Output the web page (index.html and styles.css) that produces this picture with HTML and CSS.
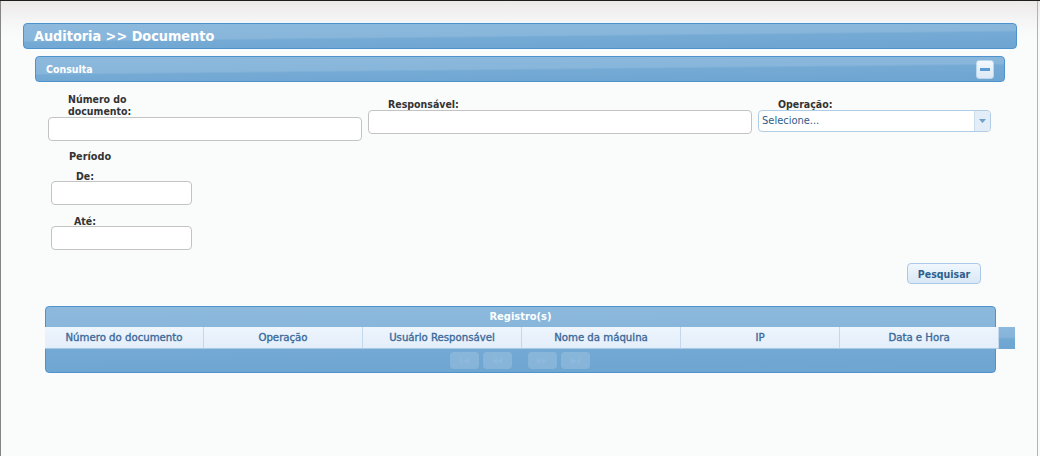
FILE: index.html
```html
<!DOCTYPE html>
<html lang="pt">
<head>
<meta charset="utf-8">
<title>Auditoria &gt;&gt; Documento</title>
<link rel="stylesheet" href="styles.css">
</head>
<body>
<div class="frame">
  <div class="bar title-bar">Auditoria &gt;&gt; Documento</div>
  <div class="bar consulta-bar">
    <span class="consulta-title">Consulta</span>
    <span class="min-btn"><span class="min-dash"></span></span>
  </div>

  <div class="form">
    <div class="row1">
      <div class="field f-num">
        <label class="lbl lbl-num">Número do documento:</label>
        <input class="inp inp-num" type="text">
      </div>
      <div class="field f-resp">
        <label class="lbl">Responsável:</label>
        <input class="inp inp-resp" type="text">
      </div>
      <div class="field f-op">
        <label class="lbl">Operação:</label>
        <div class="select">
          <span class="select-text">Selecione...</span>
          <span class="select-arrow">
            <svg width="7" height="4" viewBox="0 0 7 4"><path d="M0 0h7L3.5 4z" fill="#6c9fcb"/></svg>
          </span>
        </div>
      </div>
    </div>

    <div class="periodo">Período</div>
    <div class="field small f-de">
      <label class="lbl lbl-de">De:</label>
      <input class="inp inp-date" type="text">
    </div>
    <div class="field small f-ate">
      <label class="lbl lbl-ate">Até:</label>
      <input class="inp inp-date" type="text">
    </div>

    <div class="actions"><button class="btn" type="button">Pesquisar</button></div>
  </div>

  <div class="grid">
    <div class="grid-head">Registro(s)</div>
    <div class="grid-cols">
      <div class="col">Número do documento</div>
      <div class="col">Operação</div>
      <div class="col">Usuário Responsável</div>
      <div class="col">Nome da máquina</div>
      <div class="col">IP</div>
      <div class="col">Data e Hora</div>
      <div class="col-stub"></div>
    </div>
    <div class="grid-foot">
      <span class="pg">
        <svg width="9" height="6" viewBox="0 0 9 6"><path d="M0 0h1.5v6H0zM9 0v6L3 3z" fill="#8fb9de"/></svg>
      </span>
      <span class="pg">
        <svg width="10" height="6" viewBox="0 0 10 6"><path d="M5 0v6L0 3zM10 0v6L5 3z" fill="#8fb9de"/></svg>
      </span>
      <span class="pg pg-gap">
        <svg width="10" height="6" viewBox="0 0 10 6"><path d="M0 0v6l5-3zM5 0v6l5-3z" fill="#8fb9de"/></svg>
      </span>
      <span class="pg">
        <svg width="9" height="6" viewBox="0 0 9 6"><path d="M0 0v6l6-3zM7.5 0H9v6H7.5z" fill="#8fb9de"/></svg>
      </span>
    </div>
  </div>
</div>
</body>
</html>
```

FILE: styles.css
```css
html, body {
  margin: 0;
  padding: 0;
}

body {
  width: 1040px;
  height: 456px;
  overflow: hidden;
  border-top: 1px solid #1e1e1e;
  box-sizing: border-box;
  background: linear-gradient(#ebe8e8 0, #f5f5f5 20px, #fafcfc 38px, #fafcfc 100%);
  font-family: "DejaVu Sans Condensed", "DejaVu Sans", sans-serif;
  font-stretch: condensed;
}

.frame {
  width: 1038px;
  height: 455px;
  box-sizing: border-box;
  border-left: 1px solid #858585;
  border-right: 1px solid #a3b6c4;
  padding-top: 22px;
}

/* blue glossy bars */
.bar {
  box-sizing: border-box;
  border: 1px solid #4d93cd;
  border-radius: 4px;
  background:
    linear-gradient(179.4deg, #8cb9dc 0%, #88b6db 48%, #74aad4 54%, #6ea5d1 100%);
  color: #fff;
  font-weight: bold;
}

.title-bar {
  margin-left: 22px;
  width: 994px;
  height: 26px;
  padding-left: 10px;
  font-size: 14.3px;
  line-height: 24px;
}

.consulta-bar {
  margin-top: 7px;
  margin-left: 34px;
  width: 970px;
  height: 26px;
  padding-left: 10px;
  padding-right: 10px;
  font-size: 10.5px;
  line-height: 24px;
  display: flex;
  justify-content: space-between;
  align-items: center;
}

.min-btn {
  width: 18px;
  height: 19px;
  box-sizing: border-box;
  border: 1px solid #bcd6ec;
  border-radius: 3px;
  background: linear-gradient(#f2f8fd, #dde9f6);
  display: flex;
  align-items: center;
  justify-content: center;
}

.min-dash {
  width: 10px;
  height: 3px;
  background: #5b9bd1;
}

/* form */
.form {
  margin-left: 47px;
  width: 933px;
  padding-top: 11px;
}

.row1 {
  display: flex;
  gap: 6px;
  width: 945px;
}

.field {
  display: flex;
  flex-direction: column;
}

.lbl {
  display: block;
  color: #333;
  font-size: 10.5px;
  font-weight: bold;
  line-height: 12px;
  padding-left: 20px;
}

.lbl-num {
  width: 70px;
}

.f-resp,
.f-op {
  padding-top: 5px;
}

.inp {
  box-sizing: border-box;
  height: 24px;
  margin: 0;
  border: 1px solid #c3c3c3;
  border-radius: 4px;
  background: #fff;
  padding: 2px 4px;
  font-family: inherit;
  font-size: 11px;
  outline: none;
}

.inp-num {
  width: 314px;
}

.inp-resp {
  width: 384px;
}

.select {
  box-sizing: border-box;
  width: 233px;
  height: 22px;
  border: 1px solid #b1cde6;
  border-radius: 4px;
  background: #fff;
  display: flex;
  align-items: stretch;
  overflow: hidden;
}

.select-text {
  flex: 1;
  padding-left: 3px;
  color: #2d5c8a;
  font-size: 11px;
  line-height: 20px;
}

.select-arrow {
  width: 15px;
  border-left: 1px solid #cbdcec;
  background: #e3edf8;
  display: flex;
  align-items: center;
  justify-content: center;
}

.periodo {
  margin-top: 10px;
  padding-left: 21px;
  color: #333;
  font-size: 10.8px;
  font-weight: bold;
  line-height: 12px;
}

.small .lbl {
  line-height: 10px;
}

.f-de {
  margin-top: 8px;
}

.lbl-de {
  padding-left: 28px;
}

.f-ate {
  margin-top: 11px;
}

.lbl-ate {
  padding-left: 26px;
}

.inp-date {
  width: 141px;
  margin-left: 3px;
}

.actions {
  display: flex;
  justify-content: flex-end;
  margin-top: 13px;
}

.btn {
  box-sizing: border-box;
  width: 74px;
  height: 21px;
  margin: 0;
  padding: 0;
  border: 1px solid #aac9e6;
  border-radius: 4px;
  background: linear-gradient(#f1f7fd 0%, #e4eff9 50%, #d9e8f6 100%);
  color: #2d5e8e;
  font-family: inherit;
  font-size: 10.5px;
  font-weight: bold;
}

/* grid */
.grid {
  margin-top: 22px;
  margin-left: 44px;
  width: 951px;
  height: 67px;
  box-sizing: border-box;
  border: 1px solid #4d93cd;
  border-radius: 4px;
  background:
    linear-gradient(179.5deg, #8cb9dc 0%, #87b5da 48%, #74aad4 55%, #6ea5d1 100%);
}

.grid-head {
  height: 20px;
  color: #fff;
  font-size: 11px;
  font-weight: bold;
  line-height: 20px;
  text-align: center;
}

.grid-cols {
  display: flex;
  margin-left: -1px;
  width: 970px;
  height: 22px;
}

.col {
  width: 159px;
  box-sizing: border-box;
  border-right: 1px solid #c3d8ec;
  border-bottom: 1px solid #a9c8e4;
  background: linear-gradient(#edf5fd, #e4eefa);
  color: #3a6a9a;
  font-size: 11.3px;
  font-weight: normal;
  -webkit-text-stroke: 0.35px #3a6a9a;
  line-height: 21px;
  text-align: center;
}

.col-stub {
  width: 16px;
  background: linear-gradient(#8cb9dc 0%, #86b4da 45%, #72a9d3 55%, #6ea5d1 100%);
}

.grid-foot {
  display: flex;
  justify-content: center;
  gap: 4px;
  padding-top: 3px;
  padding-right: 2px;
}

.pg {
  width: 29px;
  height: 17px;
  box-sizing: border-box;
  border-radius: 4px;
  background: rgba(255, 255, 255, 0.16);
  display: flex;
  align-items: center;
  justify-content: center;
}

.pg-gap {
  margin-left: 12px;
}
```
